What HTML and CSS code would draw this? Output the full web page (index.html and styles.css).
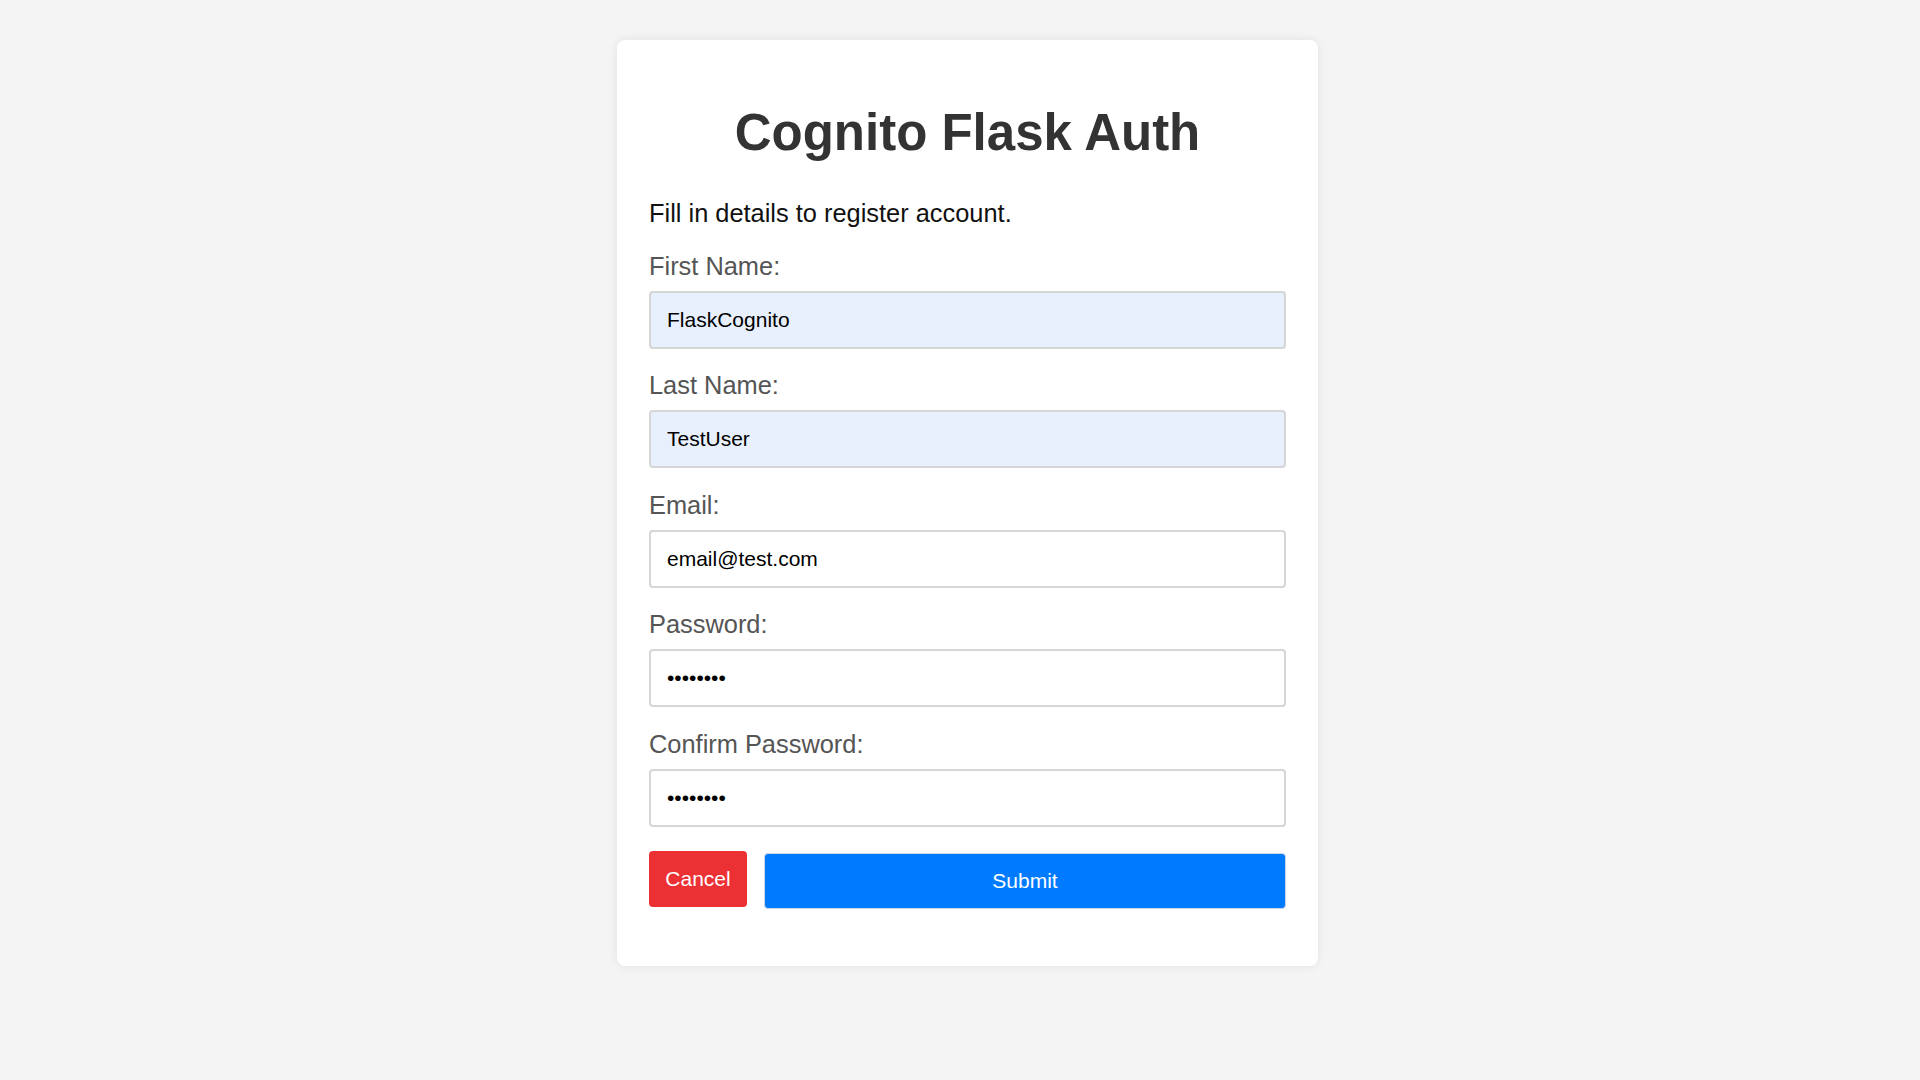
FILE: index.html
```html
<!DOCTYPE html>
<html lang="en">
<head>
<meta charset="utf-8">
<title>Cognito Flask Auth</title>
<link rel="stylesheet" href="styles.css">
</head>
<body>
<main class="page">
  <section class="card">
    <h1 class="title">Cognito Flask Auth</h1>
    <p class="intro">Fill in details to register account.</p>
    <form class="form">
      <label class="label" for="first">First Name:</label>
      <input class="input input-filled" id="first" type="text" value="FlaskCognito">
      <label class="label" for="last">Last Name:</label>
      <input class="input input-filled" id="last" type="text" value="TestUser">
      <label class="label" for="email">Email:</label>
      <input class="input" id="email" type="text" value="email@test.com">
      <label class="label" for="pw">Password:</label>
      <input class="input" id="pw" type="password" value="12345678">
      <label class="label" for="pw2">Confirm Password:</label>
      <input class="input" id="pw2" type="password" value="12345678">
      <div class="actions">
        <button type="button" class="btn btn-cancel">Cancel</button>
        <button type="button" class="btn btn-submit">Submit</button>
      </div>
    </form>
  </section>
</main>
</body>
</html>
```
FILE: styles.css
```css
* { box-sizing: border-box; }

html, body {
  margin: 0;
  padding: 0;
  background: #f4f4f4;
  font-family: "Liberation Sans", Arial, Helvetica, sans-serif;
}

.page {
  display: flex;
  justify-content: center;
  padding-left: 15px;
  padding-top: 40px;
  min-height: 1080px;
}

.card {
  width: 701px;
  height: 926px;
  background: #ffffff;
  border-radius: 8px;
  box-shadow: 0 0 10px rgba(0, 0, 0, 0.08);
  padding: 32px 32px 57px;
  align-self: flex-start;
}

.title {
  margin: 32px 0 0;
  font-size: 51px;
  line-height: 58px;
  font-weight: 700;
  color: #333333;
  text-align: center;
}

.intro {
  margin: 36.5px 0 0;
  font-size: 25.4px;
  line-height: 29px;
  color: #111111;
}

.form {
  display: flex;
  flex-direction: column;
}

.label {
  display: block;
  margin-top: 22.5px;
  margin-bottom: 10px;
  font-size: 25.4px;
  line-height: 29px;
  color: #555555;
}

.label:first-child {
  margin-top: 24px;
}

.input {
  display: block;
  width: 100%;
  height: 58px;
  margin: 0;
  padding: 0 16px;
  border: 2px solid #d6d6d6;
  border-radius: 4px;
  background: #ffffff;
  font-family: "Liberation Sans", Arial, Helvetica, sans-serif;
  font-size: 21px;
  color: #000000;
  outline: none;
}

.input-filled {
  background: #e8f0fe;
}

.actions {
  display: flex;
  align-items: flex-start;
  gap: 17px;
  margin-top: 24px;
}

.btn {
  height: 56px;
  border-radius: 4px;
  font-family: "Liberation Sans", Arial, Helvetica, sans-serif;
  font-size: 21px;
  color: #ffffff;
  cursor: pointer;
}

.btn-cancel {
  width: 98px;
  padding: 0;
  border: none;
  background: #ec3134;
}

.btn-submit {
  flex: 1;
  margin-top: 2px;
  padding: 0;
  border: 1px solid #c9d6e6;
  background: #007bff;
}
```
